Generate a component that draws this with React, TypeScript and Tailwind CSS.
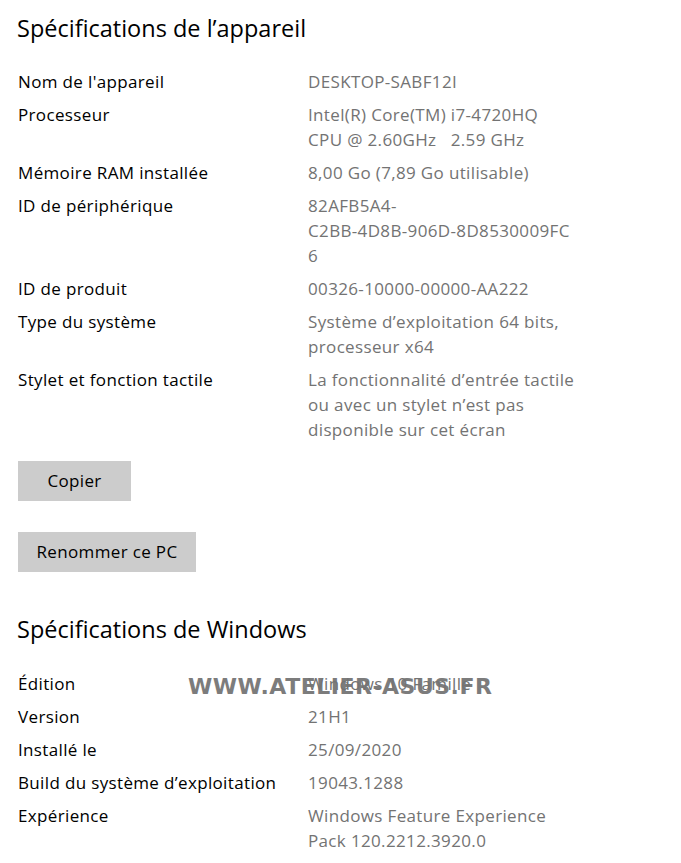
const deviceSpecs: { label: string; value: string[] }[] = [
  { label: "Nom de l'appareil", value: ['DESKTOP-SABF12I'] },
  { label: 'Processeur', value: ['Intel(R) Core(TM) i7-4720HQ', 'CPU @ 2.60GHz\u00a0\u00a0\u00a02.59 GHz'] },
  { label: 'Mémoire RAM installée', value: ['8,00 Go (7,89 Go utilisable)'] },
  { label: 'ID de périphérique', value: ['82AFB5A4-', 'C2BB-4D8B-906D-8D8530009FC', '6'] },
  { label: 'ID de produit', value: ['00326-10000-00000-AA222'] },
  { label: 'Type du système', value: ['Système d’exploitation 64 bits,', 'processeur x64'] },
  {
    label: 'Stylet et fonction tactile',
    value: ['La fonctionnalité d’entrée tactile', 'ou avec un stylet n’est pas', 'disponible sur cet écran']
  }
];

const windowsSpecs: { label: string; value: string[] }[] = [
  { label: 'Édition', value: ['Windows 10 Famille'] },
  { label: 'Version', value: ['21H1'] },
  { label: 'Installé le', value: ['25/09/2020'] },
  { label: 'Build du système d’exploitation', value: ['19043.1288'] },
  { label: 'Expérience', value: ['Windows Feature Experience', 'Pack 120.2212.3920.0'] }
];

const SpecList = ({ items }: { items: { label: string; value: string[] }[] }) => (
  <dl className="flex flex-col gap-2">
    {items.map((item) => (
      <div key={item.label} className="grid grid-cols-[290px_1fr] text-[17px] leading-[25px] tracking-[0.35px]">
        <dt className="text-black">{item.label}</dt>
        <dd className="text-[#737373]">
          {item.value.map((line, i) => (
            <div key={i} className="whitespace-nowrap">
              {line}
            </div>
          ))}
        </dd>
      </div>
    ))}
  </dl>
);

export default function App() {
  return (
    <div className="relative h-[863px] w-[681px] overflow-hidden bg-white font-['Open_Sans',sans-serif]">
      {/* watermark sits under the text */}
      <div className="absolute left-[188px] top-[674px] font-['DejaVu_Sans',sans-serif] text-[22px] font-bold leading-[26px] tracking-[0.5px] text-[#7c7c7c]">
        WWW.ATELIER-ASUS.FR
      </div>
      <div className="relative pl-[18px] pt-[14px]">
        <h2 className="-ml-px text-[23.5px] leading-[28px] text-black">Spécifications de l’appareil</h2>
        <div className="mt-[27px]">
          <SpecList items={deviceSpecs} />
        </div>
        <div className="mt-[19px] flex flex-col items-start gap-[31px]">
          <button className="h-10 w-[113px] bg-[#cccccc] text-[17px] tracking-[0.35px] text-black">Copier</button>
          <button className="h-10 w-[178px] bg-[#cccccc] text-[17px] tracking-[0.35px] text-black">
            Renommer ce PC
          </button>
        </div>
        <h2 className="-ml-px mt-[43px] text-[23.5px] leading-[28px] text-black">Spécifications de Windows</h2>
        <div className="mt-[28px]">
          <SpecList items={windowsSpecs} />
        </div>
      </div>
    </div>
  );
}
